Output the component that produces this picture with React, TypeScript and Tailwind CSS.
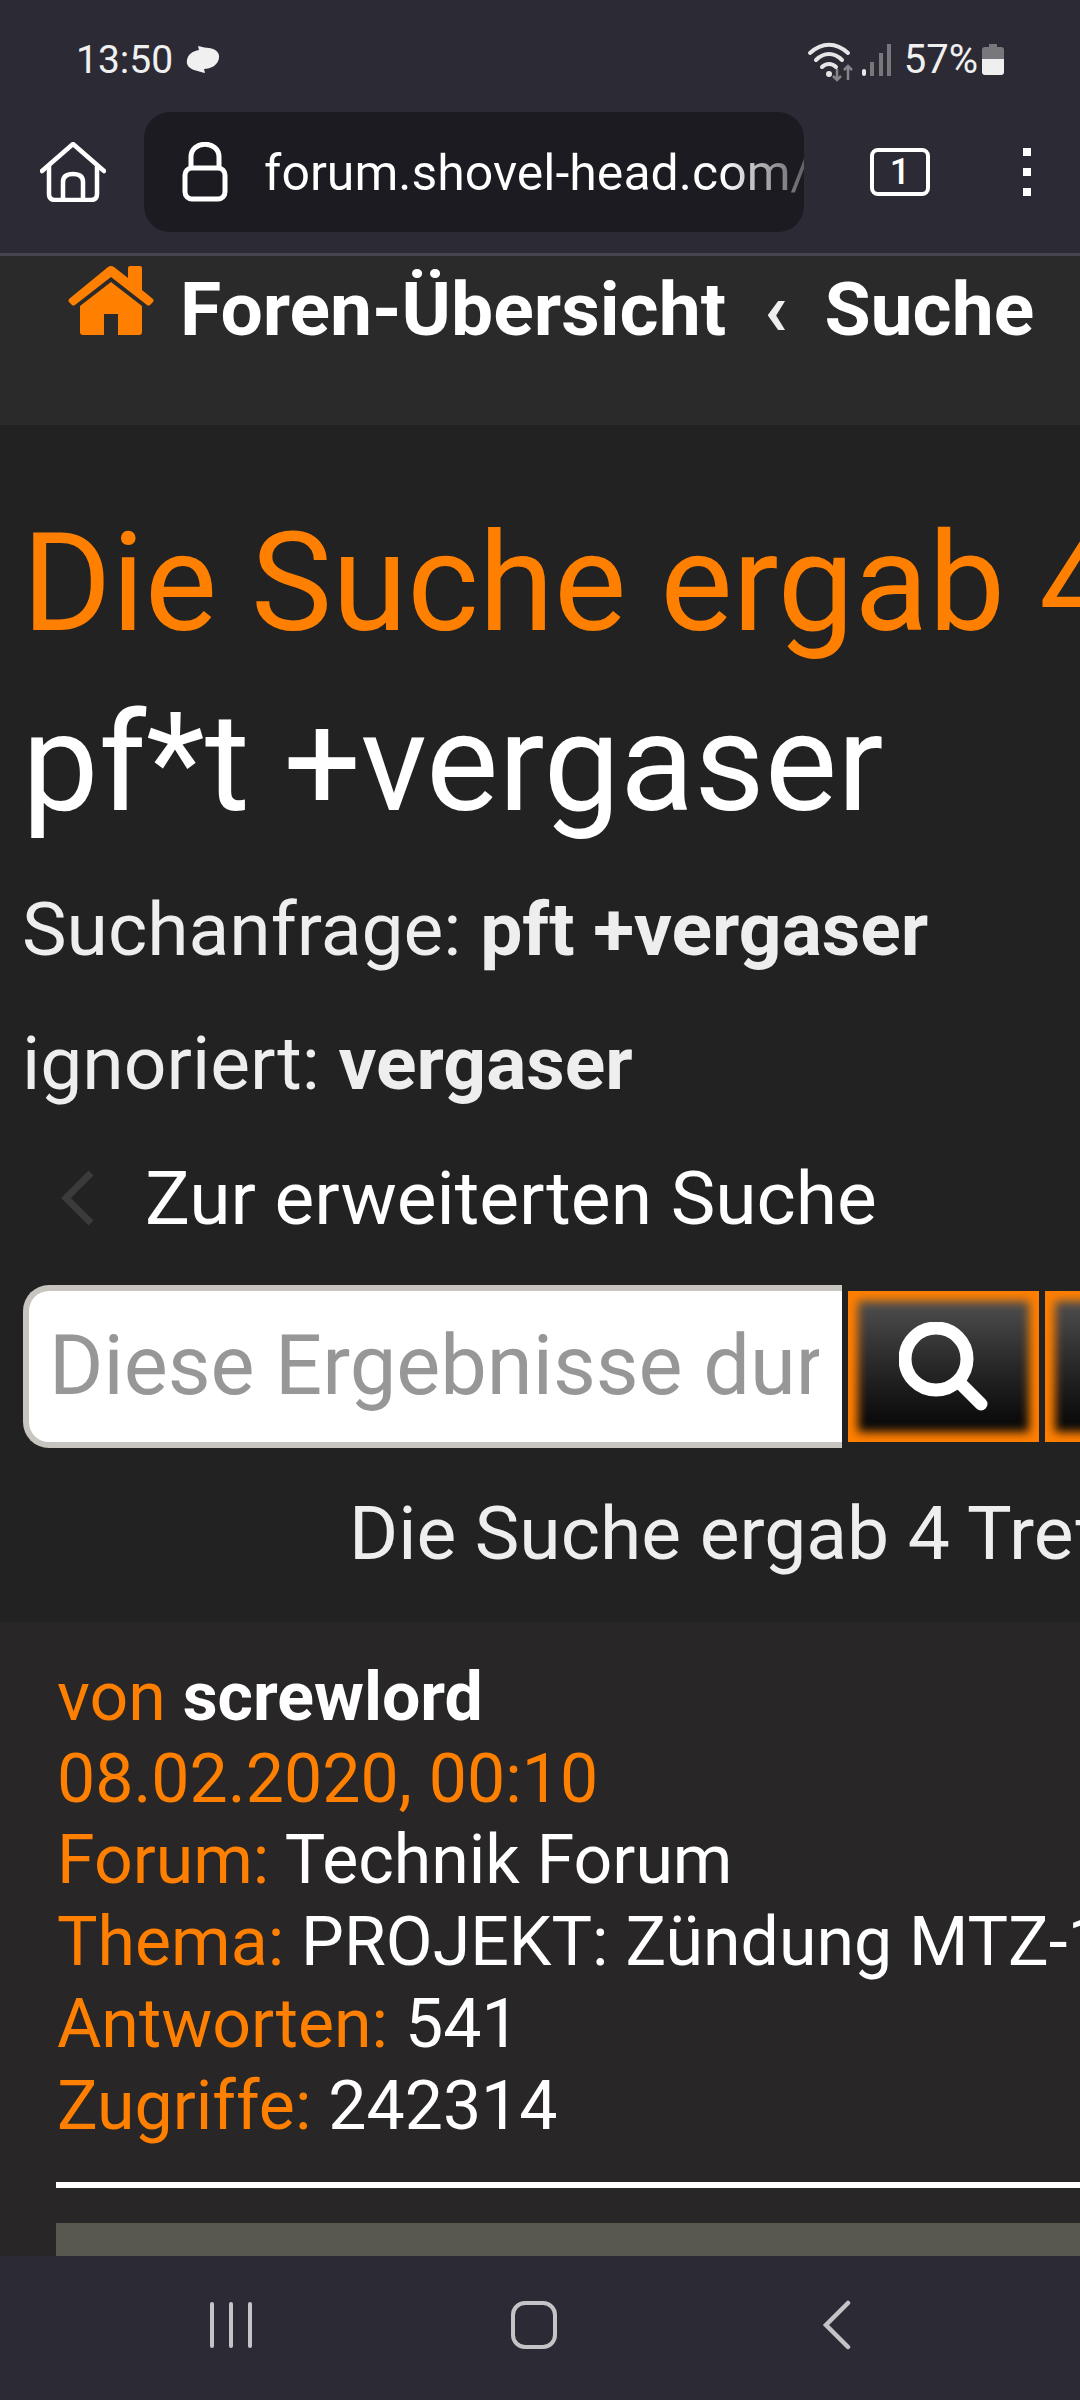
import React from 'react';

const Wifi = () => (
  <svg width="56" height="44" viewBox="0 0 56 44" fill="none" className="block">
    <path d="M6 15C18 4 32 4 44 15" stroke="#e6e6e6" strokeWidth="4" strokeLinecap="round" />
    <path d="M12 22C20 14 30 14 38 22" stroke="#e6e6e6" strokeWidth="4" strokeLinecap="round" />
    <path d="M18 29C22 25 28 25 32 29" stroke="#e6e6e6" strokeWidth="4" strokeLinecap="round" />
    <circle cx="25" cy="36" r="3" fill="#e6e6e6" />
    <path d="M33 31V42M29 38L33 42L37 38" stroke="#85858a" strokeWidth="2.5" />
    <path d="M44 42V28M40 32L44 28L48 32" stroke="#85858a" strokeWidth="2.5" />
  </svg>
);

const Signal = () => (
  <svg width="30" height="34" viewBox="0 0 30 34" className="block">
    <rect x="0" y="26" width="4" height="7" rx="2" fill="#e6e6e6" />
    <rect x="8" y="19" width="4" height="14" fill="#77777c" />
    <rect x="17" y="10" width="4" height="23" fill="#77777c" />
    <rect x="25" y="1" width="4" height="32" fill="#77777c" />
  </svg>
);

const Battery = () => (
  <svg width="22" height="32" viewBox="0 0 22 32" className="block">
    <path d="M7 0H15V3H19Q22 3 22 6V15H0V6Q0 3 3 3H7Z" fill="#77777c" />
    <path d="M0 15H22V28Q22 31 19 31H3Q0 31 0 28Z" fill="#efefef" />
  </svg>
);

const Bubble = () => (
  <svg width="36" height="30" viewBox="0 0 36 30" className="block">
    <path d="M14 5L13 1C18 2 21 3 24 3C31 4 35 8 34 13C33 20 26 24 19 24L20 28C15 27 13 26 9 25C4 23 1 20 2 15C3 9 8 6 14 5Z" fill="#f0f0f0" />
  </svg>
);

const HomeOutline = () => (
  <svg width="66" height="60" viewBox="0 0 66 60" fill="none" stroke="#fff" strokeWidth="4.5" strokeLinejoin="round" strokeLinecap="round">
    <path d="M2 29L33 2L64 29" />
    <path d="M9 24V52Q9 58 15 58H51Q57 58 57 52V24" />
    <path d="M23 58V40Q23 32 33 32Q43 32 43 40V58" />
  </svg>
);

const Lock = () => (
  <svg width="46" height="60" viewBox="0 0 46 60" fill="none" stroke="#fff" strokeWidth="5" className="shrink-0">
    <path d="M9 26V15C9 -2 37 -2 37 15V26" />
    <rect x="3" y="26" width="40" height="31" rx="7" />
  </svg>
);

const HomeSolid = () => (
  <svg width="86" height="70" viewBox="0 0 86 70" className="block">
    <path d="M40 1Q43 -1 46 1L60 12V2Q60 0 62 0H72Q74 0 74 2V24L85 33Q86 35 85 36L82 39Q80 40 79 39L43 11L7 39Q5 40 4 39L1 36Q0 35 1 33Z" fill="#ff7f00" />
    <path d="M43 16L74 40V66Q74 69 71 69H50V48H36V69H15Q12 69 12 66V40Z" fill="#ff7f00" />
  </svg>
);

const Lupe = () => (
  <svg width="90" height="90" viewBox="0 0 90 90" fill="none" stroke="#fff" strokeLinecap="round">
    <circle cx="37" cy="37" r="31" strokeWidth="13" />
    <path d="M60 60L82 82" strokeWidth="13" />
  </svg>
);

const resultRows = [
  { label: 'Forum:', value: 'Technik Forum' },
  { label: 'Thema:', value: 'PROJEKT: Zündung MTZ-12 Umbau' },
  { label: 'Antworten:', value: '541' },
  { label: 'Zugriffe:', value: '242314' },
];

const glow = 'shadow-[inset_0_0_10px_10px_#ff7f00] bg-gradient-to-b from-[#555] to-[#0c0c0c] to-[85%]';

export default function App() {
  return (
    <div className="w-[1080px] h-[2400px] flex flex-col overflow-hidden bg-[#222] font-['Roboto',sans-serif] text-white">
      {/* status bar + browser toolbar */}
      <div className="h-[256px] shrink-0 bg-[#2c2b35] border-b-[3px] border-[#47464e]">
        <div className="h-[112px] pl-[76px] pr-[72px] pt-[36px] flex items-start justify-between">
          <div className="flex items-center gap-[12px] h-[48px]">
            <span className="text-[39px] text-[#f0f0f0]">13:50</span>
            <Bubble />
          </div>
          <div className="flex items-center h-[48px]">
            <Wifi />
            <div className="ml-[2px]"><Signal /></div>
            <span className="ml-[12px] text-[40px] text-[#f0f0f0]">57%</span>
            <div className="ml-[4px] mr-[4px]"><Battery /></div>
          </div>
        </div>
        <div className="flex items-center h-[120px]">
          <div className="w-[144px] pl-[40px] shrink-0"><HomeOutline /></div>
          <div className="w-[660px] h-[120px] rounded-[26px] bg-[#1c1b22] flex items-center pl-[38px] overflow-hidden">
            <Lock />
            <span className="ml-[36px] mt-[2px] text-[50px] whitespace-nowrap bg-gradient-to-r from-white from-[84%] to-[#55555a] bg-clip-text text-transparent">forum.shovel-head.com/</span>
          </div>
          <div className="ml-[66px] w-[60px] h-[48px] border-[4px] border-white rounded-[8px] flex items-center justify-center text-[36px] font-medium leading-none">1</div>
          <div className="ml-[93px] flex flex-col gap-[12px]">
            <div className="w-[8px] h-[8px] bg-white" />
            <div className="w-[8px] h-[8px] bg-white" />
            <div className="w-[8px] h-[8px] bg-white" />
          </div>
        </div>
      </div>

      {/* page */}
      <div className="flex-1 min-h-0 overflow-hidden">
        <div className="h-[169px] bg-[#2a2a2a] pl-[68px] flex items-start whitespace-nowrap">
          <div className="mt-[10px]"><HomeSolid /></div>
          <span className="ml-[26px] mt-[9px] text-[75px] font-bold leading-[88px]">Foren-Übersicht</span>
          <span className="ml-[38px] mt-[9px] text-[75px] font-bold leading-[88px] text-[#eee]">‹</span>
          <span className="ml-[37px] mt-[9px] text-[75px] font-bold leading-[88px]">Suche</span>
        </div>

        <div className="pl-[22px] whitespace-nowrap">
          <h1 className="pt-[78px] text-[136.5px] leading-[160px] text-[#ff7f00]">Die Suche ergab 4 Treffer</h1>
          <h2 className="mt-[20px] text-[136.5px] leading-[160px]">pf*t +vergaser</h2>
          <p className="mt-[42px] text-[75px] leading-[88px] text-[#eee]">Suchanfrage: <b>pft +vergaser</b></p>
          <p className="mt-[46px] text-[75px] leading-[88px] text-[#eee]">ignoriert: <b>vergaser</b></p>
          <div className="mt-[47px] flex items-center">
            <svg width="36" height="56" viewBox="0 0 36 56" fill="none" className="ml-[38px]">
              <path d="M31 3L6 28L31 53" stroke="#3b3b3b" strokeWidth="7" />
            </svg>
            <span className="ml-[49px] text-[75px] leading-[88px]">Zur erweiterten Suche</span>
          </div>
        </div>

        <div className="mt-[43px] pl-[23px] flex items-center">
          <div className="w-[819px] h-[163px] shrink-0 bg-white border-[6px] border-r-0 border-[#c8c5c0] rounded-l-[26px] flex items-center pl-[20px]">
            <span className="w-[770px] overflow-hidden whitespace-nowrap text-[83px] text-[#979797]">Diese Ergebnisse durchsuchen</span>
          </div>
          <div className={`ml-[6px] w-[191px] h-[151px] shrink-0 flex items-center justify-center ${glow}`}>
            <Lupe />
          </div>
          <div className={`ml-[6px] w-[191px] h-[151px] shrink-0 ${glow}`} />
        </div>

        <p className="mt-[41px] pl-[349px] text-[75px] leading-[88px] text-[#eee] whitespace-nowrap">Die Suche ergab 4 Treffer</p>

        <div className="mt-[45px] bg-[#282627] pl-[57px] pt-[35px] h-[700px] whitespace-nowrap">
          <div className="text-[68px] leading-[81.7px]">
            <div className="text-[#ff7f00]">von <b className="text-white">screwlord</b></div>
            <div className="text-[#ff7f00]">08.02.2020, 00:10</div>
            {resultRows.map(row => (
              <div key={row.label}>
                <span className="text-[#ff7f00]">{row.label}</span> {row.value}
              </div>
            ))}
          </div>
          <div className="mt-[35px] -ml-[1px] h-[6px] bg-white" />
          <div className="mt-[35px] -ml-[1px] h-[100px] bg-[#58584f]" />
        </div>
      </div>

      {/* android nav bar */}
      <div className="h-[144px] shrink-0 bg-[#2c2b35] flex items-start pt-[46px]">
        <div className="ml-[210px] flex gap-[15px] h-[46px] shrink-0">
          <div className="w-[4px] h-full rounded-full bg-[#c4c4c6]" />
          <div className="w-[4px] h-full rounded-full bg-[#c4c4c6]" />
          <div className="w-[4px] h-full rounded-full bg-[#c4c4c6]" />
        </div>
        <div className="ml-[259px] -mt-[1px] w-[46px] h-[48px] rounded-[14px] border-[4px] border-[#c4c4c6] shrink-0" />
        <svg width="30" height="50" viewBox="0 0 30 50" fill="none" className="ml-[265px] -mt-[2px] shrink-0">
          <path d="M26 3L4 25L26 47" stroke="#c4c4c6" strokeWidth="4.5" strokeLinecap="round" />
        </svg>
      </div>
    </div>
  );
}
